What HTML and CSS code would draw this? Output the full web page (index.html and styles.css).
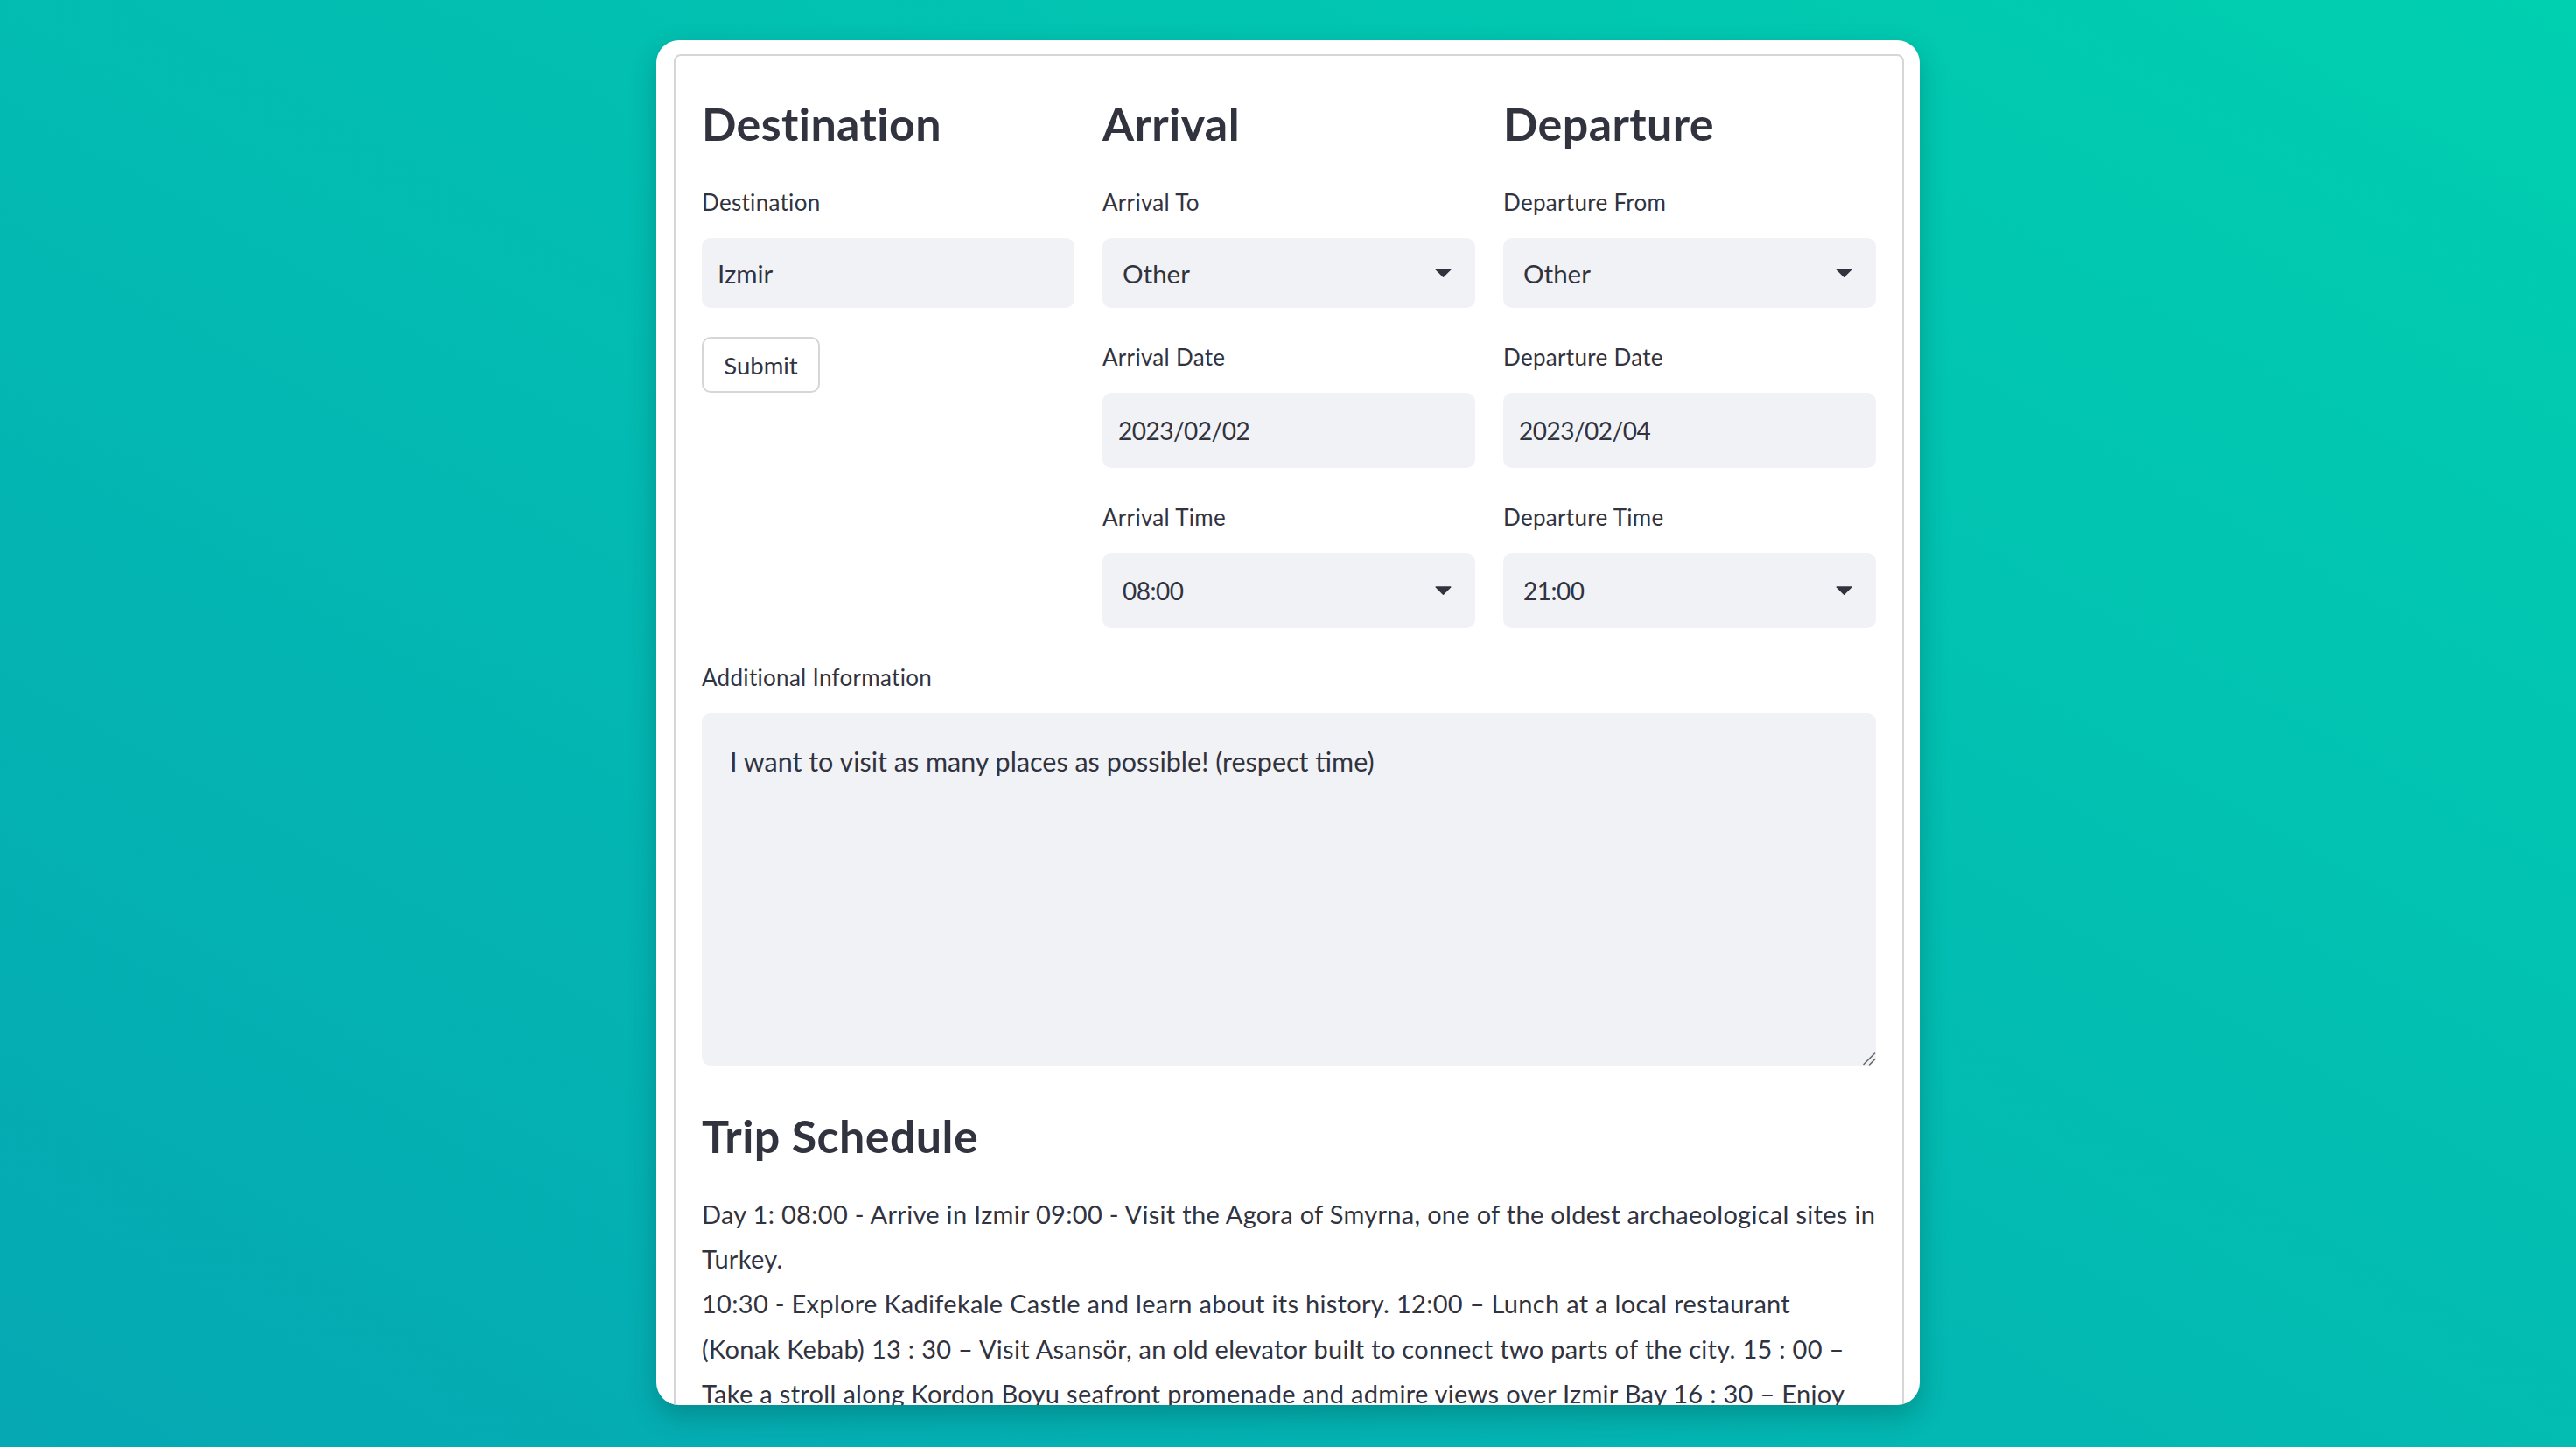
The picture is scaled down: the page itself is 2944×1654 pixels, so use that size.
FILE: index.html
```html
<!DOCTYPE html>
<html lang="en">
<head>
<meta charset="utf-8">
<title>Trip Planner</title>
<link rel="stylesheet" href="styles.css">
</head>
<body>
<main class="window">
  <section class="form">
    <div class="columns">
      <div class="col">
        <h2 class="heading">Destination</h2>
        <div class="field">
          <label class="label" for="dest">Destination</label>
          <input class="box input" id="dest" type="text" value="Izmir">
        </div>
        <button class="btn" type="button">Submit</button>
      </div>
      <div class="col">
        <h2 class="heading">Arrival</h2>
        <div class="field">
          <div class="label">Arrival To</div>
          <div class="box select"><span>Other</span><svg class="caret" width="19" height="10" viewBox="0 0 19 10"><path d="M1.2 1h16.6L9.5 9.2z" fill="#31333f" stroke="#31333f" stroke-width="1.4" stroke-linejoin="round"/></svg></div>
        </div>
        <div class="field">
          <div class="label">Arrival Date</div>
          <input class="box input tall num" type="text" value="2023/02/02">
        </div>
        <div class="field">
          <div class="label">Arrival Time</div>
          <div class="box select tall num"><span>08:00</span><svg class="caret" width="19" height="10" viewBox="0 0 19 10"><path d="M1.2 1h16.6L9.5 9.2z" fill="#31333f" stroke="#31333f" stroke-width="1.4" stroke-linejoin="round"/></svg></div>
        </div>
      </div>
      <div class="col">
        <h2 class="heading">Departure</h2>
        <div class="field">
          <div class="label">Departure From</div>
          <div class="box select"><span>Other</span><svg class="caret" width="19" height="10" viewBox="0 0 19 10"><path d="M1.2 1h16.6L9.5 9.2z" fill="#31333f" stroke="#31333f" stroke-width="1.4" stroke-linejoin="round"/></svg></div>
        </div>
        <div class="field">
          <div class="label">Departure Date</div>
          <input class="box input tall num" type="text" value="2023/02/04">
        </div>
        <div class="field">
          <div class="label">Departure Time</div>
          <div class="box select tall num"><span>21:00</span><svg class="caret" width="19" height="10" viewBox="0 0 19 10"><path d="M1.2 1h16.6L9.5 9.2z" fill="#31333f" stroke="#31333f" stroke-width="1.4" stroke-linejoin="round"/></svg></div>
        </div>
      </div>
    </div>
    <div class="field">
      <label class="label" for="info">Additional Information</label>
      <textarea class="textarea" id="info">I want to visit as many places as possible! (respect time)</textarea>
    </div>
    <h2 class="heading">Trip Schedule</h2>
    <p class="schedule">Day 1: 08:00 - Arrive in Izmir 09:00 - Visit the Agora of Smyrna, one of the oldest archaeological sites in<br>Turkey.<br>10:30 - Explore Kadifekale Castle and learn about its history. 12:00 – Lunch at a local restaurant<br>(Konak Kebab) 13 : 30 – Visit Asansör, an old elevator built to connect two parts of the city. 15 : 00 –<br>Take a stroll along Kordon Boyu seafront promenade and admire views over Izmir Bay 16 : 30 – Enjoy</p>
  </section>
</main>
</body>
</html>
```

FILE: styles.css
```css
* { box-sizing: border-box; }

html, body { margin: 0; padding: 0; }

body {
  width: 2944px;
  height: 1654px;
  overflow: hidden;
  background: linear-gradient(to top right, #05a8b3 0%, #00cfb0 100%);
  font-family: Lato, "Noto Sans", sans-serif;
  color: #31333f;
}

.window {
  width: 1444px;
  height: 1560px;
  margin: 46px auto 0;
  padding: 16px 18px 0 20px;
  background: #ffffff;
  border-radius: 26px;
  overflow: hidden;
  box-shadow: 0 12px 30px rgba(0, 50, 50, 0.28);
}

.form {
  height: 1640px;
  border: 2px solid #d6d6d9;
  border-radius: 8px;
  padding: 30px 30px 0;
  display: flex;
  flex-direction: column;
  gap: 33px;
}

.columns {
  display: grid;
  grid-template-columns: repeat(3, 1fr);
  column-gap: 32px;
  align-items: start;
}

.col {
  display: flex;
  flex-direction: column;
  gap: 33px;
}

.heading {
  margin: 0;
  padding: 14px 0 0;
  font-size: 52px;
  font-weight: 700;
  letter-spacing: 0.4px;
  line-height: 67px;
  color: #31333f;
}

.field {
  display: flex;
  flex-direction: column;
}

.label {
  display: block;
  font-size: 26px;
  letter-spacing: 0.3px;
  line-height: 46px;
  margin-bottom: 18px;
  color: #31333f;
}

.box {
  height: 80px;
  width: 100%;
  background: #f0f2f6;
  border: none;
  border-radius: 10px;
  font-family: inherit;
  font-size: 29.5px;
  color: #31333f;
  outline: none;
}

.box.tall { height: 86px; }

.box.num {
  font-size: 28px;
  letter-spacing: -0.5px;
}

.input { padding: 0 18px; }

.select {
  display: flex;
  align-items: center;
  justify-content: space-between;
  padding: 0 27px 0 23px;
}

.caret { display: block; }

.btn {
  align-self: flex-start;
  width: 135px;
  height: 64px;
  padding: 0;
  background: #ffffff;
  border: 2px solid #d6d6d9;
  border-radius: 10px;
  font-family: inherit;
  font-size: 27.5px;
  color: #31333f;
}

.textarea {
  display: block;
  width: 100%;
  height: 403px;
  resize: vertical;
  border: none;
  border-radius: 10px;
  background: #f0f2f6;
  padding: 30px 32px;
  font-family: inherit;
  font-size: 30.5px;
  line-height: 51.2px;
  color: #31333f;
  outline: none;
}

.textarea::-webkit-resizer {
  background: url("data:image/svg+xml,%3Csvg xmlns='http://www.w3.org/2000/svg' width='15' height='15' viewBox='0 0 15 15'%3E%3Cpath d='M1 13.5L13.5 1M7.5 14L14 7.5' stroke='%23686a73' stroke-width='1.6' stroke-linecap='round'/%3E%3C/svg%3E") no-repeat center;
}

.schedule {
  margin: -3px 0 0;
  font-size: 29px;
  letter-spacing: 0.3px;
  line-height: 51.2px;
  white-space: nowrap;
  color: #31333f;
}
```
